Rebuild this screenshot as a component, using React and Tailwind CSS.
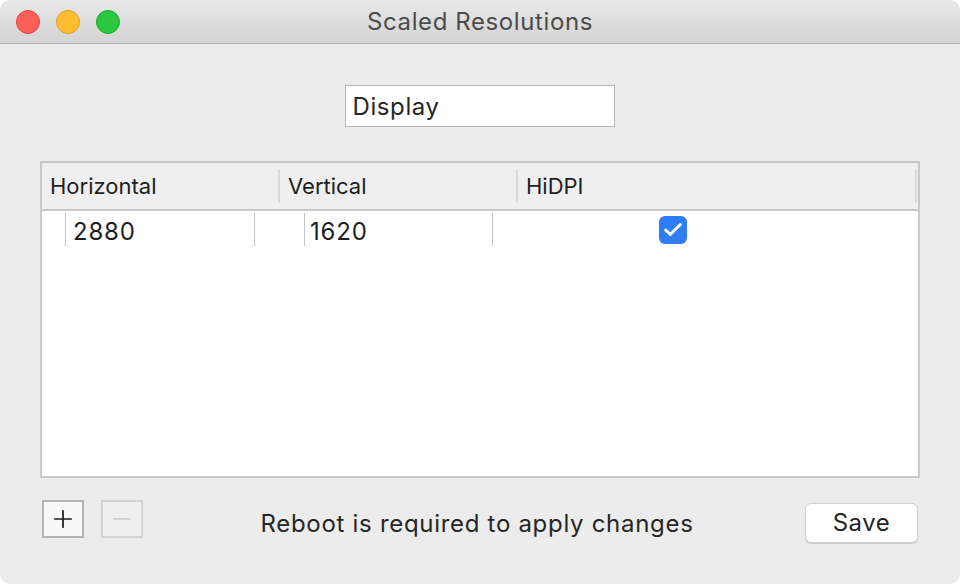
import { Check, Plus, Minus } from 'lucide-react'

function Lights() {
  return (
    <div className="absolute left-[16px] top-[10px] flex gap-[16px]">
      <span className="w-[24px] h-[24px] rounded-full bg-[#fe5f57] border border-[#e0443e]" />
      <span className="w-[24px] h-[24px] rounded-full bg-[#febc2e] border border-[#dea123]" />
      <span className="w-[24px] h-[24px] rounded-full bg-[#29c840] border border-[#1aab29]" />
    </div>
  )
}

export default function App() {
  return (
    <div className="w-[960px] h-[584px] bg-white" style={{ fontFamily: 'Inter, "Noto Sans", sans-serif' }}>
      <div className="w-full h-full rounded-[10px] overflow-hidden bg-[#ececec] flex flex-col">
        {/* Title bar */}
        <div className="relative h-[44px] shrink-0 bg-gradient-to-b from-[#e8e8e8] to-[#d4d4d4] border-b border-[#b1b1b1] flex items-center justify-center">
          <Lights />
          <span className="text-[24px] text-[#4c4c4c] tracking-[0.6px] pt-[1px]">Scaled Resolutions</span>
        </div>

        <div className="flex-1 flex flex-col px-[40px]">
          {/* Display field */}
          <div className="flex justify-center mt-[41px] pr-[1px]">
            <div className="w-[270px] h-[42px] bg-white border border-[#b6b6b6] flex items-center pl-[7px] pt-[2px] text-[24px] tracking-[0.6px] text-[#262626]">
              Display
            </div>
          </div>

          {/* Table */}
          <div className="mt-[34px] h-[317px] bg-white border-2 border-[#c9c9c9] flex flex-col">
            <div className="h-[48px] shrink-0 bg-[#efefef] border-b-2 border-[#c9c9c9] flex items-center text-[22px] text-[#1e1e1e]">
              <div className="w-[238px] pl-[8px] h-[34px] flex items-center border-r-2 border-[#dadada]">Horizontal</div>
              <div className="w-[238px] pl-[8px] h-[34px] flex items-center border-r-2 border-[#dadada]">Vertical</div>
              <div className="flex-1 pl-[8px] h-[34px] flex items-center border-r-2 border-[#dadada] mr-[1px]">HiDPI</div>
            </div>
            <div className="flex items-start pt-[2px] text-[24px] tracking-[0.8px] text-[#1e1e1e]">
              <div className="ml-[23px] w-[190px] h-[33px] border-x border-[#c4c4c4] pl-[7px] pt-[4px] flex items-center">2880</div>
              <div className="ml-[49px] w-[189px] h-[33px] border-x border-[#c4c4c4] pl-[5px] pt-[4px] flex items-center">1620</div>
              <div className="ml-[166px] mt-[3px] w-[28px] h-[28px] rounded-[6px] bg-[#2f7cf6] flex items-center justify-center">
                <Check className="text-white" size={22} strokeWidth={3.2} />
              </div>
            </div>
          </div>

          {/* Bottom bar */}
          <div className="mt-[22px] flex items-start">
            <div className="flex gap-[17px] ml-[2px]">
              <span className="w-[42px] h-[38px] bg-[#f8f8f8] border-2 border-[#b4b4b4] flex items-center justify-center text-[#1e1e1e]">
                <Plus size={28} strokeWidth={1.5} />
              </span>
              <span className="w-[42px] h-[38px] bg-[#efefef] border-2 border-[#d4d4d4] flex items-center justify-center text-[#c8c8c8]">
                <Minus size={28} strokeWidth={1.5} />
              </span>
            </div>
            <div className="flex-1 text-center text-[24px] tracking-[0.7px] text-[#262626] pt-[6px] pl-[6px]">
              Reboot is required to apply changes
            </div>
            <button className="w-[113px] h-[40px] mt-[3px] mr-[2px] bg-white rounded-[6px] border border-[#cfcfcf] shadow-[0_1px_1px_rgba(0,0,0,0.15)] text-[24px] tracking-[0.5px] text-[#262626]">
              Save
            </button>
          </div>
        </div>
      </div>
    </div>
  )
}
